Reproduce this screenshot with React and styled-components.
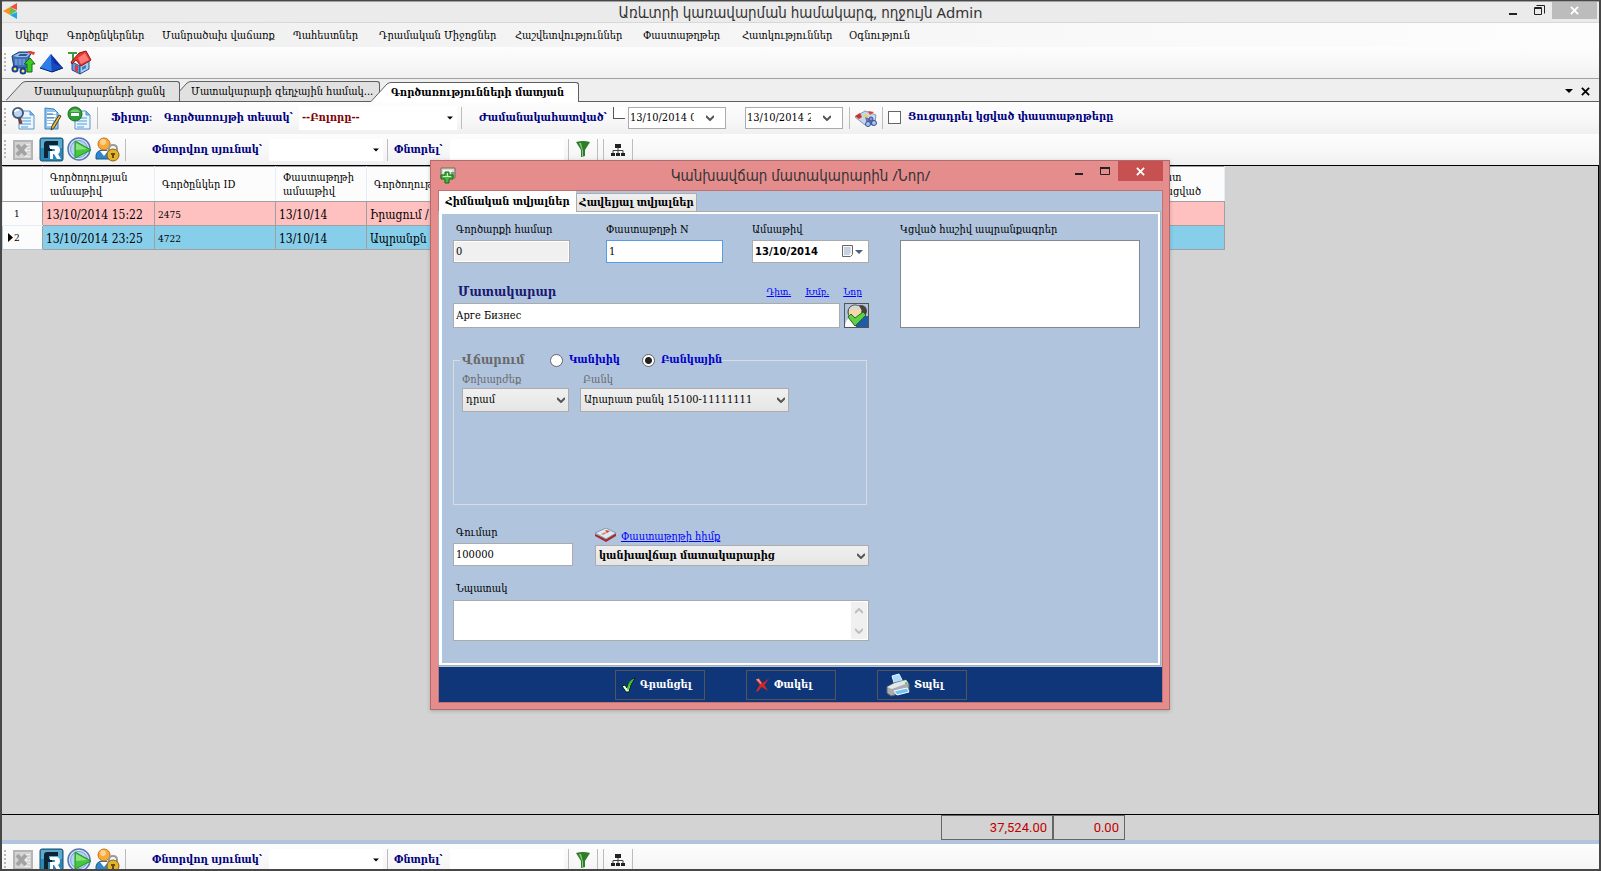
import React from 'react';
import styled, { createGlobalStyle, css } from 'styled-components';

const serif = "'DejaVu Serif Condensed', 'DejaVu Serif', 'Liberation Serif', serif";
const sans = "'Noto Sans', 'DejaVu Sans Condensed', 'DejaVu Sans', sans-serif";

const GlobalStyle = createGlobalStyle`
    * { box-sizing: border-box; }

    body {
        margin: 0;
        overflow: hidden;
        font-family: ${serif};
        font-size: 11px;
        line-height: 16px;
        color: #000;
    }

    button, input, select, textarea {
        font: inherit;
        color: inherit;
        margin: 0;
        border-radius: 0;
    }
`;

//** MAIN WINDOW **//
const Window = styled.div`
    position: relative;
    display: flex;
    flex-direction: column;
    height: 100vh;
    border: 2px solid #474747;
    border-top-width: 1px;
    background-color: #efefef;
`;

const TitleBar = styled.header`
    display: grid;
    grid-template-columns: 1fr auto 1fr;
    height: 22px;
    flex: none;
    background-color: #ebebeb;
    border-top: 1px solid #a0a0a0;
    border-bottom: 1px solid #d8d8d8;
`;

const Caption = styled.h1`
    margin: 0;
    font-family: ${sans};
    font-size: 15px;
    font-weight: normal;
    line-height: 20px;
    color: #333;
    white-space: nowrap;
`;

const WindowButtons = styled.div`
    display: flex;
    justify-content: flex-end;
    padding-right: 2px;
`;

const CaptionButton = styled.button`
    display: flex;
    align-items: center;
    justify-content: center;
    width: ${({ $close }) => ($close ? 45 : 26)}px;
    height: ${({ $tall }) => ($tall ? 20 : 17)}px;
    padding: 0;
    border: 0;
    color: ${({ $close }) => ($close ? '#fff' : '#222')};
    background-color: ${({ $close }) => $close || 'transparent'};
`;

const MenuBar = styled.nav`
    display: flex;
    align-items: center;
    height: 24px;
    flex: none;
    padding: 2px 0 0 13px;
    background: linear-gradient(to right, #efefef, #fdfdfd);
`;

const MenuItem = styled.a`
    flex: none;
    width: ${({ $width }) => $width}px;
    color: #000;
    text-decoration: none;
    white-space: nowrap;
`;

const ToolBar = styled.div`
    display: flex;
    align-items: center;
    height: 32px;
    flex: none;
    overflow: hidden;
    padding-left: 2px;
    background: linear-gradient(#fdfdfd, #f7f7f7 60%, #f0f0f0);
    border-bottom: ${({ $line }) => ($line ? `1px solid ${$line}` : '0')};
`;

const BottomBar = styled.footer`
    height: 25px;
    flex: none;
    overflow: hidden;
`;

const Grip = styled.span`
    flex: none;
    width: 2px;
    height: 20px;
    margin-right: 3px;
    background: repeating-linear-gradient(#b8b8b8 0 2px, transparent 2px 4px);
`;

const ToolButton = styled.button`
    display: flex;
    align-items: center;
    justify-content: center;
    flex: none;
    width: 28px;
    height: 26px;
    padding: 0;
    border: 0;
    background: none;
`;

const Separator = styled.span`
    flex: none;
    width: 1px;
    height: 22px;
    margin: 0 ${({ $after }) => $after || 0}px 0 ${({ $before }) => $before || 0}px;
    background-color: #bdbdbd;
`;

const ToolLabel = styled.label`
    flex: none;
    width: ${({ $width }) => $width}px;
    font-weight: bold;
    color: #000080;
    white-space: nowrap;
`;

const SelectBox = styled.span`
    display: grid;
    flex: none;
    align-items: center;
    width: ${({ $width }) => ($width ? `${$width}px` : '100%')};
    height: ${({ $height }) => $height || 24}px;

    > * { grid-area: 1 / 1; }

    svg {
        justify-self: end;
        margin-right: 4px;
        pointer-events: none;
    }
`;

const Select = styled.select`
    appearance: none;
    width: 100%;
    height: 100%;
    padding: 0 18px 0 3px;
    outline: 0;
    border: 1px solid #acacac;
    background: linear-gradient(#f0f0f0, #e5e5e5);
    font-weight: ${({ $bold }) => ($bold ? 'bold' : 'normal')};

    ${({ $flat }) => $flat && css`
        border: 0;
        background: #fff;
        color: #800000;
    `}
`;

const SearchInput = styled.input`
    flex: none;
    width: 114px;
    height: 22px;
    border: 0;
    outline: 0;
    background-color: #fff;
`;

const DateBox = styled.span`
    display: flex;
    align-items: center;
    flex: none;
    width: 98px;
    height: 22px;
    margin-right: ${({ $after }) => $after}px;
    border: 1px solid #ababab;
    background-color: #fff;

    input {
        width: 65px;
        padding: 0 0 0 1px;
        border: 0;
        outline: 0;
        background: none;
    }

    button {
        display: flex;
        justify-content: center;
        width: 31px;
        padding: 0;
        border: 0;
        background: none;
    }
`;

const Corner = styled.span`
    width: 12px;
    height: 12px;
    margin: 5px 3px 0 0;
    align-self: flex-start;
    border-left: 1px solid #555;
    border-bottom: 1px solid #555;
    background-color: #fff;
`;

const CheckBox = styled.input`
    appearance: none;
    flex: none;
    width: 13px;
    height: 13px;
    border: 1px solid #666;
    background-color: #fff;

    &:checked { background-color: #666; }
`;

const CheckLine = styled.div`
    display: flex;
    align-items: center;
    gap: 7px;
    padding-bottom: 2px;
`;

//** PAGE TABS **//
const TabStrip = styled.div`
    display: flex;
    align-items: flex-end;
    height: 23px;
    flex: none;
    padding-left: 4px;
    border-bottom: 1px solid #5f5f5f;
    background-color: #efefef;
`;

const PageTab = styled.button`
    display: flex;
    position: relative;
    z-index: ${({ $level }) => $level};
    flex: none;
    width: ${({ $width }) => $width}px;
    height: 20px;
    margin: 0 0 ${({ $active }) => ($active ? -1 : 0)}px ${({ $first }) => ($first ? 0 : -9)}px;
    padding: 0;
    border: 0;
    background: none;
    font-weight: ${({ $active }) => ($active ? 'bold' : 'normal')};

    svg { flex: none; }

    span {
        flex: 1;
        height: 20px;
        padding-left: ${({ $first }) => ($first ? 8 : 0)}px;
        line-height: 19px;
        text-align: left;
        white-space: nowrap;
        border-top: 1px solid #5f5f5f;
        border-right: 1px solid #5f5f5f;
        border-top-right-radius: 3px;
        background-color: ${({ $active }) => ($active ? '#fff' : '#e1e1e1')};
    }
`;

const StripButtons = styled.div`
    display: flex;
    align-items: center;
    gap: 8px;
    height: 22px;
    margin-left: auto;
    padding: 2px 9px 0 0;

    button {
        display: flex;
        padding: 0;
        border: 0;
        background: none;
    }
`;

//** GRID **//
const GridArea = styled.main`
    flex: 1;
    min-height: 0;
    overflow: hidden;
    border-right: 1px solid #000;
    border-bottom: 1px solid #000;
    background-color: #d3d3d3;
`;

const Grid = styled.table`
    table-layout: fixed;
    width: 1222px;
    border-collapse: collapse;
    border-top: 1px solid #a0a0a0;

    th {
        height: 35px;
        padding: 2px 7px 0;
        line-height: 14px;
        font-weight: normal;
        text-align: left;
        background-color: #fcfcfc;
        border-right: 1px solid #e4ecf5;
        border-bottom: 1px solid #a0a0a0;
    }

    td {
        height: 24px;
        padding: 2px 3px 0;
        font-size: 12px;
        white-space: nowrap;
        overflow: hidden;
        border: 1px solid #a0a0a0;
    }
`;

const Row = styled.tr`
    background-color: ${({ $color }) => $color};

    td:nth-child(3) { font-size: 10px; }

    && th {
        height: 24px;
        padding: 0 0 0 3px;
        font-size: 10px;
        border: 1px solid ${({ $current }) => ($current ? '#b9c9dc' : '#e4ecf5')};
        border-right-color: #a0a0a0;
    }

    th div {
        display: flex;
        align-items: center;
        padding-left: ${({ $current }) => ($current ? 2 : 8)}px;
    }
`;

const Totals = styled.div`
    display: flex;
    height: 25px;
    flex: none;
    padding-left: 939px;
    background-color: #d3d3d3;
`;

const Total = styled.output`
    width: ${({ $width }) => $width}px;
    padding-right: 5px;
    border: 1px solid #666;
    font-family: Roboto, ${sans};
    font-size: 13px;
    line-height: 24px;
    text-align: right;
    color: #c00000;
`;

const Stripe = styled.div`
    height: 4px;
    flex: none;
    background-color: #b0c4de;
`;

//** DIALOG **//
const Overlay = styled.div`
    position: absolute;
    inset: 0;
    display: flex;
    justify-content: center;
    align-items: flex-start;
    padding: 159px 1px 0 0;
    pointer-events: none;
`;

const Dialog = styled.section`
    width: 740px;
    flex: none;
    padding: 0 6px 6px 7px;
    border: 1px solid #b06c6c;
    background-color: #e58d8d;
    box-shadow: 0 1px 4px rgba(0, 0, 0, .2);
    pointer-events: auto;
`;

const DialogTitle = styled.header`
    display: grid;
    grid-template-columns: 1fr auto 1fr;
    height: 29px;

    > svg { margin: 6px 0 0 2px; }
    h2 { line-height: 29px; }
    ${WindowButtons} { padding-right: 0; }
`;

const DialogBody = styled.div`
    border: 1px solid #c27070;
    background-color: #b0c4de;
`;

const DialogTabs = styled.div`
    display: flex;
    align-items: flex-end;
    height: 21px;
`;

const DialogTab = styled.button`
    position: relative;
    height: ${({ $active }) => ($active ? 22 : 19)}px;
    width: ${({ $active }) => ($active ? 137 : 121)}px;
    margin-bottom: ${({ $active }) => ($active ? -1 : 0)}px;
    padding: 0;
    white-space: nowrap;
    font-weight: bold;
    border: 1px solid ${({ $active }) => ($active ? '#fff' : '#acacac')};
    background: ${({ $active }) => ($active ? '#fff' : 'linear-gradient(#f0f0f0, #e5e5e5)')};
`;

const FormPanel = styled.form`
    display: grid;
    grid-template-columns: 416px 240px;
    column-gap: 31px;
    align-content: start;
    margin-right: 2px;
    padding: 8px 11px 22px;
    border: 2px solid #fff;
    border-left-width: 3px;
    outline: 1px solid #acacac;
`;

const FieldRow = styled.div`
    display: grid;
    grid-template-columns: ${({ $columns }) => $columns};
    column-gap: ${({ $gap }) => $gap || 0}px;
    margin-top: ${({ $top }) => $top || 0}px;
    align-items: end;
`;

const Field = styled.div`
    display: flex;
    flex-direction: column;
    gap: ${({ $tight }) => ($tight ? 0 : 2)}px;
    margin-top: ${({ $top }) => $top || 0}px;
`;

const Label = styled.label`
    padding-left: ${({ $flush }) => ($flush ? 0 : 3)}px;
    white-space: nowrap;
    color: ${({ $muted }) => ($muted ? '#696969' : '#000')};
`;

const TextInput = styled.input`
    width: ${({ $width }) => ($width ? `${$width}px` : '100%')};
    height: ${({ $tall }) => ($tall ? 25 : 23)}px;
    padding: 0 2px;
    outline: 0;
    border: 1px solid ${({ $focused }) => ($focused ? '#569de5' : '#ababab')};
    background-color: #fff;

    &:read-only {
        background-color: #f0f0f0;
        box-shadow: inset 0 0 0 1px #fff;
    }
`;

const DateField = styled.div`
    display: flex;
    align-items: center;
    height: 23px;
    border: 1px solid #ababab;
    background-color: #fff;

    input {
        width: 89px;
        padding: 0 0 0 2px;
        border: 0;
        outline: 0;
        background: none;
        font-family: 'DejaVu Sans', sans-serif;
        font-size: 10px;
        font-weight: bold;
    }

    button {
        display: flex;
        align-items: center;
        gap: 1px;
        padding: 0;
        border: 0;
        background: none;
    }
`;

const LinkedList = styled.select`
    width: 240px;
    height: 88px;
    outline: 0;
    border: 1px solid #828790;
    background-color: #fff;
`;

const SupplierHead = styled.div`
    display: flex;
    align-items: center;
    height: 24px;
    margin-top: 16px;
    padding: 2px 7px 0 5px;
    gap: 14px;
`;

const SupplierLabel = styled.label`
    margin-right: auto;
    font-size: 13px;
    font-weight: bold;
    color: #191970;
`;

const Link = styled.a`
    font-size: ${({ $small }) => ($small ? 10 : 11)}px;
    color: #00f;
    white-space: nowrap;
`;

const PickButton = styled.button`
    display: flex;
    width: 25px;
    height: 25px;
    padding: 0;
    border: 1px solid #555;
    background: #b0c4de;
`;

const Payment = styled.fieldset`
    height: 155px;
    width: 414px;
    margin: 22px 0 0;
    padding: 2px 8px 0;
    border: 1px solid #dcdcdc;

    legend {
        display: flex;
        align-items: center;
        height: 20px;
        margin-left: -2px;
        padding: 0 0 0 2px;
    }
`;

const LegendText = styled.span`
    width: 88px;
    font-size: 13px;
    font-weight: bold;
    color: #696969;
`;

const RadioLabel = styled.label`
    display: flex;
    align-items: center;
    gap: 6px;
    width: ${({ $width }) => $width}px;
    font-weight: bold;
    color: #0000c8;
    white-space: nowrap;
`;

const Radio = styled.input`
    appearance: none;
    flex: none;
    width: 13px;
    height: 13px;
    border: 1px solid #666;
    border-radius: 50%;
    background-color: #fff;

    &:checked {
        background: radial-gradient(circle, #222 0 3px, #fff 4px);
    }
`;

const LinkLine = styled.div`
    display: flex;
    align-items: flex-end;
    gap: 4px;
    height: 20px;

    svg { margin-bottom: 2px; }
`;

const PurposeBox = styled.div`
    display: flex;
    height: 41px;
    margin-top: 1px;
    padding: 1px;
    border: 1px solid #ababab;
    background-color: #fff;

    textarea {
        flex: 1;
        padding: 2px;
        border: 0;
        outline: 0;
        resize: none;
        background: none;
    }
`;

const ScrollBar = styled.div`
    display: flex;
    flex-direction: column;
    justify-content: space-between;
    align-items: center;
    width: 16px;
    padding: 6px 0 5px;
    background-color: #f0f0f0;
`;

const DialogFooter = styled.footer`
    display: flex;
    gap: 41px;
    height: 35px;
    margin-top: 2px;
    padding: 3px 0 0 176px;
    background-color: #10367a;
`;

const ActionButton = styled.button`
    display: flex;
    align-items: center;
    gap: 4px;
    width: 90px;
    height: 30px;
    padding: 0 0 0 ${({ $inset }) => $inset || 5}px;
    border: 1px solid #555;
    background: none;
    color: #fff;
    font-weight: bold;
`;

//** ICONS **//
const Chevron = ({ up, color = '#555' }) => (
    <svg width="8" height="6" viewBox="0 0 8 6">
        <path d={up ? 'M0 5l4-4 4 4' : 'M0 1l4 4 4-4'} fill="none" stroke={color} strokeWidth="2" />
    </svg>
);

const Arrow = ({ color = '#000', width = 6 }) => (
    <svg width={width} height="4" viewBox="0 0 8 4"><path d="M0 0h8L4 4z" fill={color} /></svg>
);

const Cross = ({ size = 9, color = 'currentColor' }) => (
    <svg width={size} height={size} viewBox="0 0 10 10">
        <path d="M1 1l8 8M9 1l-8 8" stroke={color} strokeWidth="2" />
    </svg>
);

const Minimize = () => (
    <svg width="9" height="12" viewBox="0 0 9 12"><path d="M0 8h8v2H0z" fill="#222" /></svg>
);

const Restore = () => (
    <svg width="11" height="11" viewBox="0 0 11 11">
        <path d="M2.5 .5h8v8M.5 2.5h7v7h-7zM.5 3.5h7" fill="none" stroke="#222" />
    </svg>
);

const Maximize = () => (
    <svg width="10" height="8" viewBox="0 0 10 8">
        <path d="M.5 1v6.5h9V1" fill="none" stroke="#222" /><path d="M0 0h10v2H0z" fill="#222" />
    </svg>
);

const Logo = () => (
    <svg width="16" height="18" viewBox="0 0 16 18">
        <path d="M1 9l7-4v8z" fill="#f7941d" />
        <path d="M8 5l7-4v7z" fill="#f0503c" />
        <path d="M8 5l7 4-7 4z" fill="#72b84a" />
        <path d="M8 13l7-3v7z" fill="#1ca8e8" />
    </svg>
);

const CartIcon = () => (
    <svg width="25" height="25" viewBox="0 0 25 25">
        <path d="M1 6l7-4h13l-3 5v11H3z" fill="#3f6fb5" stroke="#1d3f78" />
        <path d="M2 6l6-3h12l-4 4H6z" fill="#9bbde6" />
        <path d="M9 4h8l-2 2H7z" fill="#2c5594" />
        <path d="M4 9h10v6H4z" fill="#6b96d1" />
        <path d="M7 8v8M11 8v8" stroke="#3f6fb5" />
        <path d="M17 1l7 1-1 3-6-2z" fill="#e8402a" />
        <circle cx="4" cy="19" r="2.5" fill="#fff04a" stroke="#1d3f9c" strokeWidth="2" />
        <circle cx="12" cy="21" r="2.5" fill="#fff04a" stroke="#1d3f9c" strokeWidth="2" />
        <path d="M19 8l5 6h-3v8h-5v-8h-3z" fill="#3fcc22" stroke="#0f6d0f" />
    </svg>
);

const PyramidIcon = () => (
    <svg width="25" height="20" viewBox="0 0 25 20">
        <path d="M12 1l12 14-11 4L1 15z" fill="#0b2f9e" />
        <path d="M12 1L1 15l12 4z" fill="#2f7de8" />
        <path d="M12 1l3 9 9 5-11 4z" fill="#174bbd" />
        <path d="M1 15l12 4 11-4" fill="none" stroke="#06226f" />
    </svg>
);

const HouseIcon = () => (
    <svg width="25" height="25" viewBox="0 0 25 25">
        <path d="M1 2h9v2H7v7H5V4H1z" fill="#3c9a3a" />
        <path d="M5 12l8 4v8l-8-4z" fill="#5b9de0" stroke="#24508c" />
        <path d="M13 15l9-4v8l-9 5z" fill="#a9cdf2" stroke="#24508c" />
        <path d="M8 15l3 1v6l-3-1z" fill="#e33" />
        <path d="M4 12l8-9 7-2 5 9-10 6-5-6-4 4z" fill="#e93434" stroke="#901818" />
        <path d="M11 8l7-5 4 7-8 4z" fill="#ff7b72" />
        <path d="M15 17l4-2v3l-4 2z" fill="#4178bd" />
    </svg>
);

const Page = () => (
    <g transform="translate(7 0)">
        <path d="M1 5h11l4 4v14H1z" fill="#e9f5ff" stroke="#5a95c8" />
        <path d="M12 5v4h4z" fill="#80b8e2" stroke="#5a95c8" />
        <path d="M3 12h10M3 15h10M3 18h10M3 21h7" stroke="#9cc8ea" strokeWidth="2" />
    </g>
);

const FindIcon = () => (
    <svg width="25" height="25" viewBox="0 0 25 25">
        <Page />
        <path d="M8 11l2 7" stroke="#7c3c38" strokeWidth="3" />
        <circle cx="7" cy="7" r="5" fill="#b9d5f2" stroke="#455a72" strokeWidth="2" />
        <path d="M4 6a3 3 0 0 1 4-2" fill="none" stroke="#fff" strokeWidth="2" />
    </svg>
);

const NoteIcon = () => (
    <svg width="25" height="25" viewBox="0 0 25 25">
        <path d="M6 2l9 1 4 4v16H6z" fill="#8fc4ef" stroke="#3e83bc" />
        <path d="M8 7h9M8 10h9M8 13h8M8 16h6M8 19h5" stroke="#fff" strokeWidth="2" />
        <path d="M8 8h6M8 12h7" stroke="#3477b1" />
        <path d="M20 9l2 1-7 12-3 2 1-4z" fill="#f0b93a" stroke="#4b3b1a" />
    </svg>
);

const RemoveIcon = () => (
    <svg width="25" height="25" viewBox="0 0 25 25">
        <Page />
        <circle cx="8" cy="8" r="7" fill="#2e9a38" stroke="#16711f" />
        <path d="M3 6a6 6 0 0 1 10 0z" fill="#79cc75" />
        <path d="M4 7h8v3H4z" fill="#fff" />
    </svg>
);

const ExcelIcon = () => (
    <svg width="20" height="20" viewBox="0 0 20 20">
        <path d="M0 0h20v20H0z" fill="#b5b5b5" /><path d="M2 2h16v16H2z" fill="#d4d4d4" />
        <path d="M11 4h6v13h-6z" fill="#ececec" />
        <path d="M4 5l9 10M13 5L4 15" stroke="#a3a3a3" strokeWidth="4" />
        <path d="M14 6h3M14 9h3M14 12h3M14 15h3" stroke="#bdbdbd" />
    </svg>
);

const ReportIcon = () => (
    <svg width="25" height="25" viewBox="0 0 25 25">
        <rect x="1" y="1" width="23" height="23" rx="2" fill="#2b87b8" stroke="#1b4f6d" />
        <path d="M2 2h21v9H2z" fill="#5aa9cf" />
        <path d="M5 21V7q0-3 3-3h11v4h-9v3h3v3h-4v7z" fill="#0e2433" />
        <path d="M11 9h6q4 0 4 4 0 3-2 4l3 5h-4l-3-5h-1v5h-3v-8h4q1 0 1-1t-1-1h-4z" fill="#fff" />
    </svg>
);

const PlayIcon = () => (
    <svg width="25" height="25" viewBox="0 0 25 25">
        <circle cx="12" cy="12" r="11" fill="#d4e6fa" stroke="#5577b5" strokeWidth="1.5" />
        <circle cx="12" cy="12" r="8.5" fill="#b5d3f3" stroke="#7f9ed0" />
        <path d="M8 4l16 9-16 8z" fill="#45c83c" stroke="#219222" />
        <path d="M9 6l11 6-11 1z" fill="#8be27f" />
    </svg>
);

const UserLockIcon = () => (
    <svg width="25" height="25" viewBox="0 0 25 25">
        <path d="M1 22q-1-9 7-9t9 9z" fill="#2f86c8" stroke="#175a94" />
        <path d="M5 14l4 5 4-5z" fill="#fff" />
        <circle cx="9" cy="7" r="6" fill="#f9a83a" stroke="#c4701a" />
        <circle cx="8" cy="5" r="3" fill="#ffd28a" />
        <path d="M14 15v-3q0-4 4-4t4 4v3" fill="none" stroke="#9a9a9a" strokeWidth="2" />
        <circle cx="18" cy="18" r="6" fill="#e4b32e" stroke="#8a6512" />
        <path d="M18 16v5M16 17h4" stroke="#6b4b0a" strokeWidth="2" />
    </svg>
);

const FunnelIcon = () => (
    <svg width="14" height="17" viewBox="0 0 14 17">
        <path d="M0 1q7-2 14 0l-5 8v6l-4 1V9z" fill="#2f7d2a" />
        <path d="M3 2h2l2 8v5H6V9z" fill="#86cf7a" />
    </svg>
);

const TreeIcon = () => (
    <svg width="14" height="14" viewBox="0 0 14 14">
        <path d="M4 1h6v4H4zM0 10h4v3H0zM5 10h4v3H5zM10 10h4v3h-4z" fill="#222" />
        <path d="M7 5v5M2 10V7.5h10V10" fill="none" stroke="#444" />
    </svg>
);

const BinocularsIcon = () => (
    <svg width="24" height="20" viewBox="0 0 24 20">
        <path d="M1 9l10-6 11 4-1 7-10 3z" fill="#c7d6e8" stroke="#8796ad" />
        <path d="M1 8l5-3 2 4-3 2z" fill="#c6372b" />
        <path d="M14 3l6 1-4 3z" fill="#d8452f" /><path d="M10 7l4 2" stroke="#f3cf50" strokeWidth="2" />
        <path d="M11 9l9 3v6l-7-2z" fill="#6673b8" />
        <circle cx="14" cy="16" r="2.5" fill="#9fc8ef" stroke="#3e4c90" />
        <circle cx="20" cy="15" r="2.5" fill="#9fc8ef" stroke="#3e4c90" />
        <circle cx="17" cy="11" r="2" fill="#8a93cf" stroke="#3e4c90" />
    </svg>
);

const AddIcon = () => (
    <svg width="17" height="17" viewBox="0 0 17 17">
        <path d="M1 1h14v10H1z" fill="#d8dccb" stroke="#67705a" />
        <path d="M3 3h9v3H3z" fill="#f2f3ea" />
        <path d="M11 5h4v7h-4z" fill="#8d947f" />
        <path d="M5 5h4v3h4v4H9v4H5v-4H1V8h4z" fill="#41bd3a" stroke="#19661c" />
        <path d="M6 6h1v3H3v1h8V9H8V6z" fill="#d6f7cc" />
    </svg>
);

const UserCheckIcon = () => (
    <svg width="23" height="23" viewBox="0 0 23 23">
        <path d="M12 12h11v11H9z" fill="#1e5ca8" /><path d="M0 23q0-10 8-9l3 9z" fill="#fff" />
        <circle cx="16" cy="7" r="6" fill="#4d4335" />
        <circle cx="10" cy="8" r="7" fill="#f3d7ad" stroke="#353535" />
        <path d="M4 6q2-6 10-4l3 5q-6-3-13-1z" fill="#d8d8cd" />
        <path d="M3 13l3-3 4 4 8-6 3 3-11 11z" fill="#5ed044" stroke="#236c1e" />
    </svg>
);

const CalendarIcon = () => (
    <svg width="12" height="13" viewBox="0 0 12 13">
        <path d="M.5 .5h10v9l-2 2h-8z" fill="#f6f7fa" stroke="#6e6460" />
        <path d="M2 3h7M2 5h7M2 7h7M2 9h5M3 2v8M5 2v8M7 2v8" stroke="#b9c4d6" />
    </svg>
);

const BookIcon = () => (
    <svg width="22" height="15" viewBox="0 0 22 15">
        <path d="M0 6l11 5 10-6v3l-10 6L0 8z" fill="#a82b2b" />
        <path d="M0 5l11-5 10 5-10 6z" fill="#dceaf5" stroke="#8397ad" />
        <path d="M6 6l4-2 2 1-4 2z" fill="#ef8a60" /><path d="M10 2l5 1-3 2z" fill="#d73e32" />
    </svg>
);

const CheckIcon = () => (
    <svg width="15" height="16" viewBox="0 0 15 16">
        <path d="M1 9l3-1 2 3q2-8 8-10-5 6-6 14H5z" fill="#eaffdf" stroke="#05220d" />
        <path d="M6 11q2-8 7-9-4 5-6 12z" fill="#35c928" />
    </svg>
);

const CancelIcon = () => (
    <svg width="15" height="16" viewBox="0 0 16 16">
        <path d="M1 2l3-1 4 5 7-5-5 7 4 6-7-4-4 5H1l4-7z" fill="#d32a1e" />
        <path d="M1 2l3-1 3 5-1 1z" fill="#f58a80" />
    </svg>
);

const PrinterIcon = () => (
    <svg width="24" height="24" viewBox="0 0 24 24">
        <path d="M6 3l7-2 4 8-8 4z" fill="#a9dcff" stroke="#e5f5ff" />
        <path d="M1 14l7-4 12-3 3 4v7L5 23l-4-3z" fill="#a7adb3" stroke="#666" />
        <path d="M1 14l8-4 11-3 2 3-16 6z" fill="#e5e8ea" />
        <path d="M8 18l13-3 2 4-12 3z" fill="#72c2f7" stroke="#fff" />
        <circle cx="20" cy="10" r="1" fill="#36d52c" />
    </svg>
);

//** CONTENT **//
const menu = [
    ['Սկիզբ', 52],
    ['Գործընկերներ', 95],
    ['Մանրածախ վաճառք', 131],
    ['Պահեստներ', 86],
    ['Դրամական Միջոցներ', 136],
    ['Հաշվետվություններ', 128],
    ['Փաստաթղթեր', 99],
    ['Հատկություններ', 107],
    ['Օգնություն', 80],
];

const columns = [
    ['Գործողության ամսաթիվ', 112],
    ['Գործընկեր ID', 121],
    ['Փաստաթղթի ամսաթիվ', 91],
    ['Գործողութ', 250],
    ['', 524],
    ['Փաստ ստացված', 84],
];

const rows = [
    { color: '#ffc0c0', cells: ['13/10/2014 15:22', '2475', '13/10/14', 'Իրացում /', '', ''] },
    { color: '#87ceeb', current: true, cells: ['13/10/2014 23:25', '4722', '13/10/14', 'Ապրանքն', '', ''] },
];

const Tab = ({ text, ...props }) => (
    <PageTab {...props}>
        <svg width="20" height="20" viewBox="0 0 20 20">
            <path d="M0 19.5L16 2q2-1.5 4-1.5V20H0z" fill={props.$active ? '#fff' : '#e1e1e1'} />
            <path d="M0 19.5L16 2q2-1.5 4-1.5" fill="none" stroke="#5f5f5f" />
        </svg>
        <span>{text}</span>
    </PageTab>
);

const SearchBar = ({ id, ...props }) => (
    <ToolBar {...props}>
        <Grip />
        <ToolButton><ExcelIcon /></ToolButton>
        <ToolButton><ReportIcon /></ToolButton>
        <ToolButton><PlayIcon /></ToolButton>
        <ToolButton><UserLockIcon /></ToolButton>
        <Separator $before={4} $after={26} />
        <ToolLabel $width={117} htmlFor={`${id}-column`}>Փնտրվող սյունակ՝</ToolLabel>
        <SelectBox $width={114} $height={22}>
            <Select $flat id={`${id}-column`} />
            <Arrow />
        </SelectBox>
        <Separator $before={4} $after={6} />
        <ToolLabel $width={56} htmlFor={`${id}-text`}>Փնտրել՝</ToolLabel>
        <SearchInput id={`${id}-text`} />
        <Separator $before={4} />
        <ToolButton><FunnelIcon /></ToolButton>
        <Separator $after={5} />
        <Separator />
        <ToolButton><TreeIcon /></ToolButton>
        <Separator />
    </ToolBar>
);

const PaymentForm = () => (
    <FormPanel>
        <div>
            <FieldRow $columns="153px 146px 117px">
                <Field>
                    <Label htmlFor="deal">Գործարքի համար</Label>
                    <TextInput $width={117} id="deal" readOnly value="0" />
                </Field>
                <Field>
                    <Label $flush htmlFor="doc">Փաստաթղթի N</Label>
                    <TextInput $width={117} id="doc" $focused defaultValue="1" />
                </Field>
                <Field>
                    <Label $flush htmlFor="date">Ամսաթիվ</Label>
                    <DateField>
                        <input id="date" defaultValue="13/10/2014" />
                        <button type="button"><CalendarIcon /><Arrow color="#47618a" width={8} /></button>
                    </DateField>
                </Field>
            </FieldRow>
            <SupplierHead>
                <SupplierLabel htmlFor="supplier">Մատակարար</SupplierLabel>
                <Link $small href="#view">Դիտ.</Link>
                <Link $small href="#edit">Խմբ.</Link>
                <Link $small href="#new">Նոր</Link>
            </SupplierHead>
            <FieldRow $columns="387px 25px" $gap={4}>
                <TextInput $tall id="supplier" defaultValue="Арге Бизнес" />
                <PickButton type="button"><UserCheckIcon /></PickButton>
            </FieldRow>
            <Payment>
                <legend>
                    <LegendText>Վճարում</LegendText>
                    <RadioLabel $width={92}><Radio type="radio" name="payment" />Կանխիկ</RadioLabel>
                    <RadioLabel><Radio type="radio" name="payment" defaultChecked />Բանկային</RadioLabel>
                </legend>
                <FieldRow $columns="118px 209px">
                    <div>
                        <Label $muted $flush htmlFor="currency">Փոխարժեք</Label>
                        <SelectBox $width={107}>
                            <Select id="currency"><option>դրամ</option></Select>
                            <Chevron />
                        </SelectBox>
                    </div>
                    <div>
                        <Label $muted htmlFor="bank">Բանկ</Label>
                        <SelectBox>
                            <Select id="bank"><option>Արարատ բանկ 15100-11111111</option></Select>
                            <Chevron />
                        </SelectBox>
                    </div>
                </FieldRow>
            </Payment>
            <FieldRow $columns="120px 274px" $gap={22} $top={20}>
                <Field>
                    <Label htmlFor="sum">Գումար</Label>
                    <TextInput id="sum" defaultValue="100000" />
                </Field>
                <Field $tight>
                    <LinkLine><BookIcon /><Link href="#basis">Փաստաթղթի հիմք</Link></LinkLine>
                    <SelectBox $height={21}>
                        <Select $bold aria-label="Փաստաթղթի հիմք"><option>կանխավճար մատակարարից</option></Select>
                        <Chevron />
                    </SelectBox>
                </Field>
            </FieldRow>
            <Field $top={15}>
                <Label htmlFor="purpose">Նպատակ</Label>
                <PurposeBox>
                    <textarea id="purpose" />
                    <ScrollBar><Chevron up color="#bfbfbf" /><Chevron color="#bfbfbf" /></ScrollBar>
                </PurposeBox>
            </Field>
        </div>
        <Field>
            <Label $flush htmlFor="linked">Կցված հաշիվ ապրանքագրեր</Label>
            <LinkedList id="linked" size="4" />
        </Field>
    </FormPanel>
);

const PaymentDialog = () => (
    <Overlay>
        <Dialog role="dialog" aria-labelledby="dialog-title">
            <DialogTitle>
                <AddIcon />
                <Caption as="h2" id="dialog-title">Կանխավճար մատակարարին /Նոր/</Caption>
                <WindowButtons>
                    <CaptionButton $tall><Minimize /></CaptionButton>
                    <CaptionButton $tall><Maximize /></CaptionButton>
                    <CaptionButton $tall $close="#c75050"><Cross /></CaptionButton>
                </WindowButtons>
            </DialogTitle>
            <DialogBody>
                <DialogTabs>
                    <DialogTab $active>Հիմնական տվյալներ</DialogTab>
                    <DialogTab>Հավելյալ տվյալներ</DialogTab>
                </DialogTabs>
                <PaymentForm />
                <DialogFooter>
                    <ActionButton><CheckIcon />Գրանցել</ActionButton>
                    <ActionButton $inset={8}><CancelIcon />Փակել</ActionButton>
                    <ActionButton $inset={8}><PrinterIcon />Տպել</ActionButton>
                </DialogFooter>
            </DialogBody>
        </Dialog>
    </Overlay>
);

const App = () => (
    <Window>
        <GlobalStyle />
        <TitleBar>
            <Logo />
            <Caption>Առևտրի կառավարման համակարգ, ողջույն Admin</Caption>
            <WindowButtons>
                <CaptionButton><Minimize /></CaptionButton>
                <CaptionButton><Restore /></CaptionButton>
                <CaptionButton $close="#bcbcbc"><Cross /></CaptionButton>
            </WindowButtons>
        </TitleBar>
        <MenuBar>
            {menu.map(([text, width]) => <MenuItem key={text} $width={width} href="#menu">{text}</MenuItem>)}
        </MenuBar>
        <ToolBar $line="#a0a0a0">
            <Grip />
            <ToolButton><CartIcon /></ToolButton>
            <ToolButton><PyramidIcon /></ToolButton>
            <ToolButton><HouseIcon /></ToolButton>
        </ToolBar>
        <TabStrip>
            <Tab $first $level={2} $width={174} text="Մատակարարների ցանկ" />
            <Tab $level={1} $width={209} text="Մատակարարի զեղչային համակ..." />
            <Tab $active $level={3} $width={208} text="Գործառությունների մատյան" />
            <StripButtons>
                <button><Arrow width={8} /></button>
                <button><Cross color="#000" /></button>
            </StripButtons>
        </TabStrip>
        <ToolBar>
            <Grip />
            <ToolButton><FindIcon /></ToolButton>
            <ToolButton><NoteIcon /></ToolButton>
            <ToolButton><RemoveIcon /></ToolButton>
            <Separator $before={4} $after={13} />
            <ToolLabel as="span" $width={53}>Ֆիլտր։</ToolLabel>
            <ToolLabel $width={135} htmlFor="kind">Գործառույթի տեսակ՝</ToolLabel>
            <SelectBox $width={158}>
                <Select $flat $bold id="kind"><option>--Բոլորը--</option></Select>
                <Arrow />
            </SelectBox>
            <Separator $before={4} $after={17} />
            <ToolLabel $width={134} htmlFor="from">Ժամանակահատված՝</ToolLabel>
            <Corner />
            <DateBox $after={19}><input id="from" defaultValue="13/10/2014 00:00" /><button><Chevron /></button></DateBox>
            <DateBox $after={6}><input aria-label="Ժամանակահատված" defaultValue="13/10/2014 23:59" /><button><Chevron /></button></DateBox>
            <Separator $after={2} />
            <ToolButton><BinocularsIcon /></ToolButton>
            <Separator $before={2} $after={5} />
            <CheckLine>
                <CheckBox type="checkbox" id="linked-docs" />
                <ToolLabel htmlFor="linked-docs">Ցուցադրել կցված փաստաթղթերը</ToolLabel>
            </CheckLine>
        </ToolBar>
        <SearchBar id="top" $line="#000" />
        <GridArea>
            <Grid>
                <colgroup>
                    <col width="40" />
                    {columns.map(([text, width]) => <col key={text} width={width} />)}
                </colgroup>
                <thead>
                    <tr>
                        <th />
                        {columns.map(([text]) => <th key={text}>{text}</th>)}
                    </tr>
                </thead>
                <tbody>
                    {rows.map(({ color, current, cells }, i) => (
                        <Row key={i} $color={color} $current={current}>
                            <th>
                                <div>
                                    {current && <svg width="6" height="9" viewBox="0 0 6 9"><path d="M0 0l5 4.5L0 9z" /></svg>}
                                    {i + 1}
                                </div>
                            </th>
                            {cells.map((cell, j) => <td key={j}>{cell}</td>)}
                        </Row>
                    ))}
                </tbody>
            </Grid>
        </GridArea>
        <Totals>
            <Total $width={112}>37,524.00</Total>
            <Total $width={72}>0.00</Total>
        </Totals>
        <Stripe />
        <BottomBar><SearchBar id="bottom" /></BottomBar>
        <PaymentDialog />
    </Window>
);

export default App;
